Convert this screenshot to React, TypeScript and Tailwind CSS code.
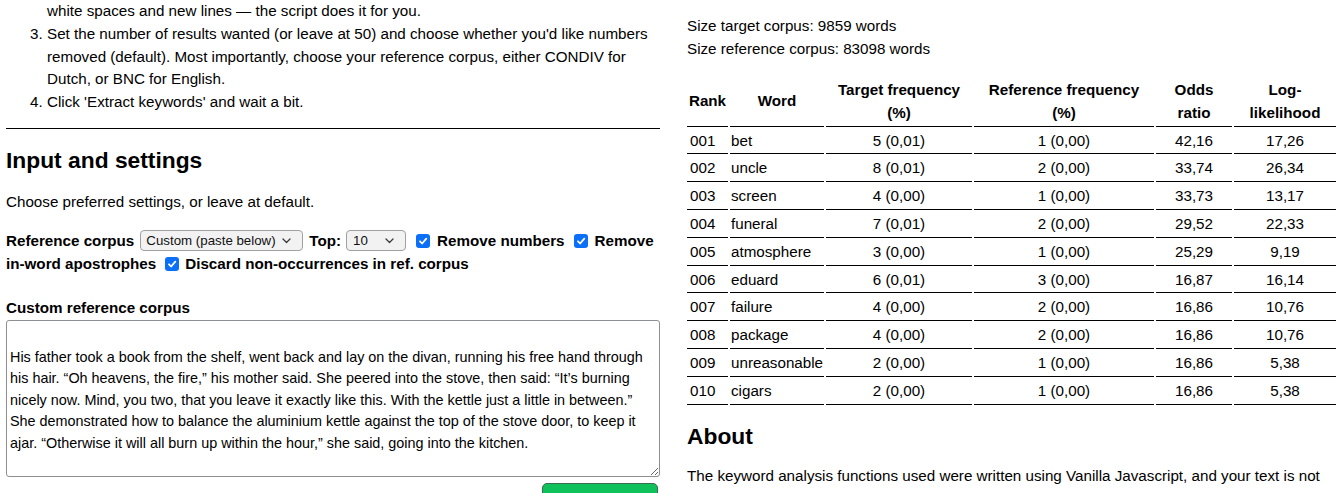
import React from "react";

const rows: [string, string, string, string, string, string][] = [
  ["001", "bet", "5 (0,01)", "1 (0,00)", "42,16", "17,26"],
  ["002", "uncle", "8 (0,01)", "2 (0,00)", "33,74", "26,34"],
  ["003", "screen", "4 (0,00)", "1 (0,00)", "33,73", "13,17"],
  ["004", "funeral", "7 (0,01)", "2 (0,00)", "29,52", "22,33"],
  ["005", "atmosphere", "3 (0,00)", "1 (0,00)", "25,29", "9,19"],
  ["006", "eduard", "6 (0,01)", "3 (0,00)", "16,87", "16,14"],
  ["007", "failure", "4 (0,00)", "2 (0,00)", "16,86", "10,76"],
  ["008", "package", "4 (0,00)", "2 (0,00)", "16,86", "10,76"],
  ["009", "unreasonable", "2 (0,00)", "1 (0,00)", "16,86", "5,38"],
  ["010", "cigars", "2 (0,00)", "1 (0,00)", "16,86", "5,38"],
];

function Chevron() {
  return (
    <svg width="9" height="6" viewBox="0 0 9 6" className="shrink-0">
      <path d="M1 1l3.5 3.5L8 1" fill="none" stroke="#3a3a3a" strokeWidth="1.3" strokeLinecap="round" strokeLinejoin="round" />
    </svg>
  );
}

function Select({ label, cls }: { label: string; cls: string }) {
  return (
    <span
      className={`inline-flex items-center justify-between align-middle h-[21px] border border-[#a0a0a0] rounded-[4px] bg-[#f2f2f2] pr-[11px] text-[13.3px] font-normal leading-none text-[#111] whitespace-nowrap relative top-[-1px] ${cls}`}
    >
      <span>{label}</span>
      <Chevron />
    </span>
  );
}

function Check({ cls }: { cls: string }) {
  return (
    <span
      className={`inline-flex items-center justify-center align-middle w-[14px] h-[14px] rounded-[3px] bg-[#0b6ff7] relative top-[-1px] ${cls}`}
    >
      <svg width="10" height="10" viewBox="0 0 10 10">
        <path d="M2 5.3l2.1 2.2L8.3 2.6" fill="none" stroke="#fff" strokeWidth="1.8" strokeLinecap="round" strokeLinejoin="round" />
      </svg>
    </span>
  );
}

const corpus =
  "\nHis father took a book from the shelf, went back and lay on the divan, running his free hand through his hair. “Oh heavens, the fire,” his mother said. She peered into the stove, then said: “It’s burning nicely now. Mind, you two, that you leave it exactly like this. With the kettle just a little in between.” She demonstrated how to balance the aluminium kettle against the top of the stove door, to keep it ajar. “Otherwise it will all burn up within the hour,” she said, going into the kitchen.";

export default function App() {
  return (
    <div className="h-[493px] w-[1344px] overflow-hidden bg-white text-black font-['Liberation_Sans',Arial,sans-serif] text-[15.2px] leading-[22.8px]">
      <div className="grid grid-cols-[654px_653px] gap-[27px] pl-[6px] pr-[4px]">
        {/* Left column */}
        <div className="flex flex-col">
          <p className="pl-[41px]">white spaces and new lines — the script does it for you.</p>
          <ol start={3} className="list-decimal pl-[41px]">
            <li>
              Set the number of results wanted (or leave at 50) and choose whether you'd like numbers removed
              (default). Most importantly, choose your reference corpus, either CONDIV for Dutch, or BNC for English.
            </li>
            <li>Click 'Extract keywords' and wait a bit.</li>
          </ol>
          <hr className="mt-[14px] border-0 border-t border-black" />
          <h2 className="mt-[18px] text-[22.8px] leading-[26px] font-bold">Input and settings</h2>
          <p className="mt-[18px]">Choose preferred settings, or leave at default.</p>
          <p className="mt-[16px] font-bold">
            Reference corpus
            <Select label="Custom (paste below)" cls="w-[163px] pl-[5px] ml-[6px] mr-[6px]" />
            Top:
            <Select label="10" cls="w-[60px] pl-[6px] ml-[5px] mr-[10px]" />
            <Check cls="mr-[7px]" />
            Remove numbers
            <Check cls="ml-[9px] mr-[7px]" />
            Remove in-word apostrophes
            <Check cls="ml-[9px] mr-[6px]" />
            Discard non-occurrences in ref. corpus
          </p>
          <p className="mt-[22px] font-bold">Custom reference corpus</p>
          <textarea
            className="block w-full h-[157px] border border-[#8e8e95] rounded-[3px] px-[3px] pt-[4px] pb-[3px] text-[14.4px] leading-[21.5px] text-black font-['Liberation_Sans',Arial,sans-serif] resize-y outline-none"
            defaultValue={corpus}
          />
          <div className="mt-[6px] flex justify-end pr-[2px]">
            <button className="w-[116px] h-[46px] rounded-[5px] bg-[#0fc15a] border border-[#3d6b50] text-white font-bold text-[15px] whitespace-nowrap">
              Extract keywords
            </button>
          </div>
        </div>

        {/* Right column */}
        <div className="flex flex-col pt-[14px]">
          <p className="leading-[23px]">Size target corpus: 9859 words</p>
          <p className="leading-[23px]">Size reference corpus: 83098 words</p>
          <table className="mt-[16px] -ml-[2px] w-[653px] table-fixed border-separate border-spacing-[2px] leading-[22.8px]">
            <thead>
              <tr>
                <th className="w-[41px] px-[1px] py-[1px] border-b border-black font-bold text-center">Rank</th>
                <th className="w-[94px] px-[3px] py-[1px] border-b border-black font-bold text-center">Word</th>
                <th className="w-[146px] px-[3px] py-[1px] border-b border-black font-bold text-center">
                  Target frequency (%)
                </th>
                <th className="w-[180px] px-[3px] py-[1px] border-b border-black font-bold text-center">
                  Reference frequency (%)
                </th>
                <th className="w-[76px] px-[3px] py-[1px] border-b border-black font-bold text-center">Odds ratio</th>
                <th className="w-[102px] px-[3px] py-[1px] border-b border-black font-bold text-center">
                  Log-likelihood
                </th>
              </tr>
            </thead>
            <tbody>
              {rows.map((r) => (
                <tr key={r[0]}>
                  <td className="px-[3px] py-[1px] border-b border-black text-left">{r[0]}</td>
                  <td className="px-[1px] py-[1px] border-b border-black text-left">{r[1]}</td>
                  <td className="px-[3px] py-[1px] border-b border-black text-center">{r[2]}</td>
                  <td className="px-[3px] py-[1px] border-b border-black text-center">{r[3]}</td>
                  <td className="px-[3px] py-[1px] border-b border-black text-center">{r[4]}</td>
                  <td className="px-[3px] py-[1px] border-b border-black text-center">{r[5]}</td>
                </tr>
              ))}
            </tbody>
          </table>
          <h2 className="mt-[16px] text-[22.8px] leading-[26px] font-bold">About</h2>
          <p className="mt-[16.6px]">
            The keyword analysis functions used were written using Vanilla Javascript, and your text is not sent to
            any server. Everything happens in your own browser.
          </p>
        </div>
      </div>
    </div>
  );
}
